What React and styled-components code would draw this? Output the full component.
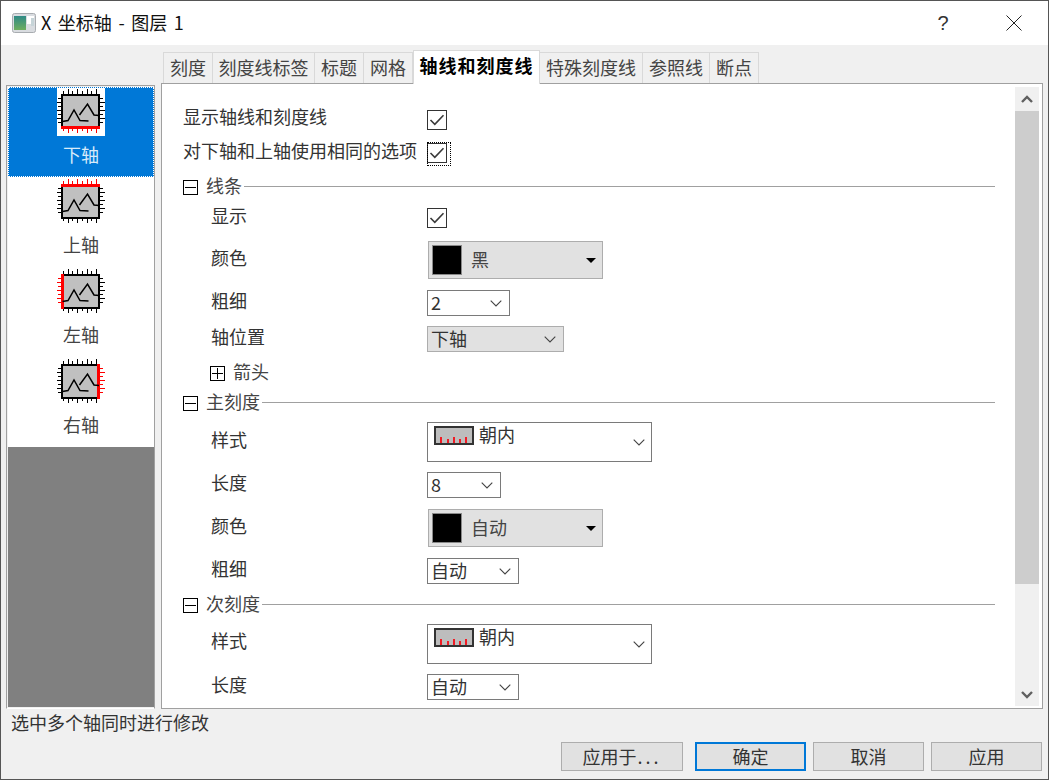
import React from 'react';
import styled, { createGlobalStyle } from 'styled-components';

const Global = createGlobalStyle`
  html, body { margin: 0; padding: 0; background: #f0f0f0; }
  * { box-sizing: border-box; }
  body { font-family: "Noto Sans CJK SC", "Liberation Sans", sans-serif; font-size: 18px; color: #333; }
`;

const Dialog = styled.div`
  width: 1049px; height: 780px; display: flex; flex-direction: column;
  background: #f0f0f0; border: 1px solid #555; overflow: hidden;
`;
const TitleBar = styled.div`
  height: 44px; flex: none; background: #fff; display: flex; align-items: center;
  padding-left: 11px;
`;
const TitleText = styled.div`
  margin-left: 5px; margin-bottom: 2px; flex: 1; font-size: 18px; line-height: 24px; color: #111;
  white-space: pre; word-spacing: 2.5px;
`;
const TitleButton = styled.div`
  width: 46px; height: 44px; display: flex; align-items: center; justify-content: center;
  color: #333; font-size: 20px; font-family: "Liberation Sans", sans-serif;
`;
const HelpButton = styled(TitleButton)`
  margin-right: 25px;
`;
const CloseButton = styled(TitleButton)`
  margin-right: 11px;
`;
const Workspace = styled.div`
  height: 659px; flex: none; margin-top: 5px; padding-left: 5px; display: flex;
`;
const Sidebar = styled.div`
  width: 149px; margin-top: 35px; display: flex; flex-direction: column;
  border: 1px solid; border-color: #a0a0a0 #a0a0a0 #fff #a0a0a0;
  box-shadow: inset 1px 1px 0 #f0f0f0;
  padding: 1px 0 1px 1px;
`;
const AxisItem = styled.div`
  height: 90px; flex: none; display: flex; flex-direction: column; align-items: center;
  background: ${p => (p.$selected ? '#0078d7' : '#fff')};
  color: ${p => (p.$selected ? '#d8ebfa' : '#444')};
  outline: ${p => (p.$selected ? '1px dotted #fff' : 'none')};
  outline-offset: -1px;
  padding-top: 1px;
`;
const AxisName = styled.div`
  margin-top: 5px; font-size: 18px; line-height: 26px;
`;
const SidebarFill = styled.div`
  flex: 1; background: #808080;
`;
const MainColumn = styled.div`
  width: 882px; margin-left: 6px; display: flex; flex-direction: column;
`;
const TabStrip = styled.div`
  height: 33px; flex: none; padding-left: 2px; display: flex; align-items: flex-end;
  position: relative; z-index: 1;
`;
const Tab = styled.div`
  height: ${p => (p.$active ? '34px' : '31px')};
  width: ${p => p.$w}px;
  margin-bottom: ${p => (p.$active ? '-1px' : '0')};
  background: ${p => (p.$active ? '#fff' : '#f0f0f0')};
  border: 1px solid #d9d9d9;
  border-left: ${p => (p.$active ? '1px solid #d9d9d9' : '0')};
  border-bottom: 0;
  font-weight: ${p => (p.$active ? 700 : 400)};
  color: ${p => (p.$active ? '#000' : '#444')};
  letter-spacing: ${p => (p.$active ? '1px' : '0')};
  font-size: 18px; line-height: 28px; text-align: center; white-space: nowrap;
`;
const FirstTab = styled(Tab)`
  border-left: 1px solid #d9d9d9;
`;
const Panel = styled.div`
  height: 626px; flex: none; background: #fff; border: 1px solid #a0a0a0;
  display: flex; overflow: hidden;
`;
const Form = styled.div`
  flex: 1; min-width: 0; padding: 19px 20px 0 21px; overflow: hidden;
`;
const Row = styled.div`
  height: ${p => p.$h}px; display: flex; align-items: center;
`;
const Label = styled.div`
  width: 244px; flex: none; padding-left: ${p => (p.$indent ? 28 : 0)}px;
  margin-bottom: ${p => p.$lift ?? 6}px;
  line-height: 24px; white-space: nowrap; color: #333;
`;
const Section = styled.div`
  height: ${p => p.$h || 30}px; display: flex; align-items: center;
  padding-left: ${p => (p.$indent ? 27 : 0)}px;
`;
const SectionTitle = styled.div`
  margin-left: 8px; margin-bottom: 2px; line-height: 24px; white-space: nowrap; color: #444;
`;
const Expander = styled.div`
  width: 15px; height: 15px; margin-top: 3px; flex: none; border: 1px solid #000; background: #fff;
  display: flex; align-items: center; justify-content: center;
`;
const Rule = styled.div`
  flex: 1; height: 1px; margin-left: 2px; background: #a0a0a0;
`;
const CheckBox = styled.div`
  width: 20px; height: 20px; border: 1px solid #333; background: #fff;
  display: flex; align-items: center; justify-content: center;
`;
const FocusRing = styled.div`
  width: 24px; height: 24px; outline: 1px dotted #000; outline-offset: -1px;
  padding: 1px 0 0 0;
`;
const Combo = styled.div`
  width: ${p => p.$w}px; height: ${p => p.$h || 26}px; flex: none;
  display: flex; align-items: center;
  background: ${p => (p.$filled ? '#e1e1e1' : '#fff')};
  border: 1px solid ${p => (p.$filled ? '#adadad' : '#7a7a7a')};
  padding: 0 7px 0 3px; line-height: 24px; color: #333;
`;
const ComboValue = styled.div`
  flex: 1; white-space: nowrap; font-size: 18px; margin-bottom: 2px;
`;
const ColorCombo = styled(Combo)`
  padding: 0 6px 0 3px; margin-left: 1px;
`;
const Swatch = styled.div`
  width: 30px; height: 30px; flex: none; background: #000; border: 1px solid #8a8a8a;
`;
const SwatchName = styled.div`
  flex: 1; margin-left: 9px; margin-bottom: 3px; color: #444;
`;
const Caret = styled.div`
  width: 0; height: 0; border: 5px solid transparent; border-top-color: #000; border-bottom: 0;
`;
const StyleCombo = styled(Combo)`
  align-items: flex-start; padding: 3px 6px 0 6px;
`;
const StyleName = styled.div`
  flex: 1; margin-left: 5px; font-size: 18px; line-height: 20px; margin-top: -2px;
`;
const StyleChevron = styled.div`
  align-self: center; margin-top: -3px; display: flex;
`;
const ScrollBar = styled.div`
  width: 24px; flex: none; margin: 3px 3px 2px 0; background: #f0f0f0;
  display: flex; flex-direction: column;
`;
const ScrollArrow = styled.div`
  height: 23px; flex: none; display: flex; align-items: center; justify-content: center;
`;
const ScrollThumb = styled.div`
  height: 473px; flex: none; margin-top: 1px; background: #cdcdcd;
`;
const ScrollTrack = styled.div`
  flex: 1;
`;
const Footer = styled.div`
  flex: 1; display: flex; flex-direction: column; padding: 0 6px 0 10px;
`;
const Status = styled.div`
  height: 33px; flex: none; line-height: 26px; color: #333;
`;
const Buttons = styled.div`
  display: flex; justify-content: flex-end;
`;
const Button = styled.div`
  width: ${p => p.$w}px; height: 29px; margin-left: ${p => p.$gap}px;
  display: flex; align-items: center; justify-content: center;
  background: #e1e1e1; border: ${p => (p.$primary ? '2px solid #0078d7' : '1px solid #adadad')};
  font-size: 18px; color: #333; padding-bottom: 1px;
`;
const Ellipsis = styled.span`
  letter-spacing: 3px; margin-left: 1px;
`;

// Small dialog glyph in the caption
const AppIcon = () => (
  <svg width="24" height="20" viewBox="0 0 24 20">
    <defs>
      <linearGradient id="capfill" x1="0" y1="0" x2="0" y2="1">
        <stop offset="0" stopColor="#2f8a86" />
        <stop offset="1" stopColor="#6fae5e" />
      </linearGradient>
    </defs>
    <rect x="0.5" y="0.5" width="23" height="19" rx="2" fill="#d9dce0" stroke="#a8acb0" />
    <rect x="2" y="3" width="12" height="14" fill="url(#capfill)" />
    <rect x="15" y="3" width="7" height="8" fill="#fff" />
    <rect x="19" y="5" width="3" height="8" fill="#c6d4d8" />
  </svg>
);

const CloseGlyph = () => (
  <svg width="16" height="16" viewBox="0 0 16 16">
    <path d="M0.5 0.5L15.5 15.5M15.5 0.5L0.5 15.5" stroke="#222" strokeWidth="1" fill="none" />
  </svg>
);

const topTicks = [6.5, 11.5, 15.5, 20.5, 25.5, 30.5, 34.5, 39.5];
const sideTicks = [10.5, 14.5, 18.5, 22.5, 26.5, 30.5, 34.5];

// Axis chip: a plotted curve in a frame with ticks, the chosen side painted red
const AxisGlyph = ({ side, backed }) => {
  const tone = s => (s === side ? '#ff0000' : '#000');
  return (
    <svg width="48" height="48" viewBox="0 0 48 48" style={{ background: backed ? '#fff' : 'none', display: 'block' }}>
      <rect x="5" y="7" width="37" height="33" fill="#c0c0c0" stroke="#000" strokeWidth="2" />
      {topTicks.map((x, i) => (
        <React.Fragment key={x}>
          <line x1={x} x2={x} y1={i % 2 ? 1 : 3} y2="6" stroke={tone('top')} strokeWidth="1" />
          <line x1={x} x2={x} y1="41" y2={i % 2 ? 45 : 43} stroke={tone('bottom')} strokeWidth="1" />
        </React.Fragment>
      ))}
      {sideTicks.map((y, i) => (
        <React.Fragment key={y}>
          <line x1={i % 2 ? 0 : 1} x2="4" y1={y} y2={y} stroke={tone('left')} strokeWidth="1" />
          <line x1="43" x2={i % 2 ? 48 : 46} y1={y} y2={y} stroke={tone('right')} strokeWidth="1" />
        </React.Fragment>
      ))}
      {side === 'bottom' && <rect x="4" y="38" width="39" height="3" fill="#ff0000" />}
      {side === 'top' && <rect x="4" y="6" width="39" height="3" fill="#ff0000" />}
      {side === 'left' && <rect x="4" y="6" width="3" height="35" fill="#ff0000" />}
      {side === 'right' && <rect x="40" y="6" width="3" height="35" fill="#ff0000" />}
      <path d="M5.5 33.5L11 32.5L17 22L23 32.5L31.5 33M22.5 27L30.5 16L37 27L42 27.5" fill="none" stroke="#000" strokeWidth="1.5" />
    </svg>
  );
};

const Check = () => (
  <svg width="18" height="18" viewBox="0 0 18 18">
    <path d="M2.5 9L6.8 13.3L15.5 4.2" fill="none" stroke="#3a3a3a" strokeWidth="1.6" />
  </svg>
);

const Chevron = () => (
  <svg width="12" height="7" viewBox="0 0 12 7">
    <path d="M0.7 0.7L6 6L11.3 0.7" fill="none" stroke="#444" strokeWidth="1.1" />
  </svg>
);

const Minus = () => (
  <svg width="13" height="13" viewBox="0 0 13 13">
    <path d="M1 6.5H12" stroke="#000" strokeWidth="1" />
  </svg>
);
const Plus = () => (
  <svg width="13" height="13" viewBox="0 0 13 13">
    <path d="M1 6.5H12M6.5 1V12" stroke="#000" strokeWidth="1" />
  </svg>
);

// Tick style preview: inward red ticks along the bottom of a grey strip
const TickStyle = () => (
  <svg width="40" height="19" viewBox="0 0 40 19" style={{ flex: 'none' }}>
    <rect x="1" y="1" width="38" height="17" fill="#bdbdbd" stroke="#333" strokeWidth="2" />
    {[6, 13, 19, 25, 31].map((x, i) => (
      <rect key={x} x={x} y={i % 2 ? 13 : 11} width="2" height={i % 2 ? 4 : 6} fill="#f01c25" />
    ))}
  </svg>
);

const ScrollChevron = ({ up }) => (
  <svg width="12" height="8" viewBox="0 0 12 8">
    <path d={up ? 'M1 7L6 2L11 7' : 'M1 1L6 6L11 1'} fill="none" stroke="#606060" strokeWidth="2.4" />
  </svg>
);

const axes = [
  { side: 'bottom', name: '下轴' },
  { side: 'top', name: '上轴' },
  { side: 'left', name: '左轴' },
  { side: 'right', name: '右轴' },
];
const tabs = [
  ['刻度', 50], ['刻度线标签', 102], ['标题', 49], ['网格', 49],
  ['轴线和刻度线', 127], ['特殊刻度线', 103], ['参照线', 67], ['断点', 49],
];

const ValueCombo = ({ w, value, filled }) => (
  <Combo $w={w} $filled={filled}>
    <ComboValue>{value}</ComboValue>
    <Chevron />
  </Combo>
);
const ColorPick = ({ name }) => (
  <ColorCombo $w={175} $h={38} $filled>
    <Swatch />
    <SwatchName>{name}</SwatchName>
    <Caret />
  </ColorCombo>
);
const TickCombo = () => (
  <StyleCombo $w={225} $h={40}>
    <TickStyle />
    <StyleName>朝内</StyleName>
    <StyleChevron><Chevron /></StyleChevron>
  </StyleCombo>
);

export default function App() {
  return (
    <>
      <Global />
      <Dialog>
        <TitleBar>
          <AppIcon />
          <TitleText>X 坐标轴 - 图层 1</TitleText>
          <HelpButton>?</HelpButton>
          <CloseButton><CloseGlyph /></CloseButton>
        </TitleBar>
        <Workspace>
          <Sidebar>
            {axes.map((a, i) => (
              <AxisItem key={a.side} $selected={i === 0}>
                <AxisGlyph side={a.side} backed={i === 0} />
                <AxisName>{a.name}</AxisName>
              </AxisItem>
            ))}
            <SidebarFill />
          </Sidebar>
          <MainColumn>
            <TabStrip>
              {tabs.map(([t, w], i) => {
                const Item = i === 0 ? FirstTab : Tab;
                return <Item key={t} $w={w} $active={i === 4}>{t}</Item>;
              })}
            </TabStrip>
            <Panel>
              <Form>
                <Row $h={34}>
                  <Label $lift={8}>显示轴线和刻度线</Label>
                  <CheckBox><Check /></CheckBox>
                </Row>
                <Row $h={34}>
                  <Label $lift={8}>对下轴和上轴使用相同的选项</Label>
                  <FocusRing><CheckBox><Check /></CheckBox></FocusRing>
                </Row>
                <Section>
                  <Expander><Minus /></Expander>
                  <SectionTitle>线条</SectionTitle>
                  <Rule />
                </Section>
                <Row $h={34}>
                  <Label $indent>显示</Label>
                  <CheckBox><Check /></CheckBox>
                </Row>
                <Row $h={50}>
                  <Label $indent>颜色</Label>
                  <ColorPick name="黑" />
                </Row>
                <Row $h={36}>
                  <Label $indent>粗细</Label>
                  <ValueCombo w={83} value="2" />
                </Row>
                <Row $h={36}>
                  <Label $indent>轴位置</Label>
                  <ValueCombo w={137} value="下轴" filled />
                </Row>
                <Section $indent>
                  <Expander><Plus /></Expander>
                  <SectionTitle>箭头</SectionTitle>
                </Section>
                <Section>
                  <Expander><Minus /></Expander>
                  <SectionTitle>主刻度</SectionTitle>
                  <Rule />
                </Section>
                <Row $h={50}>
                  <Label $indent>样式</Label>
                  <TickCombo />
                </Row>
                <Row $h={36}>
                  <Label $indent>长度</Label>
                  <ValueCombo w={74} value="8" />
                </Row>
                <Row $h={50}>
                  <Label $indent>颜色</Label>
                  <ColorPick name="自动" />
                </Row>
                <Row $h={36}>
                  <Label $indent>粗细</Label>
                  <ValueCombo w={92} value="自动" />
                </Row>
                <Section>
                  <Expander><Minus /></Expander>
                  <SectionTitle>次刻度</SectionTitle>
                  <Rule />
                </Section>
                <Row $h={50}>
                  <Label $indent $lift={8}>样式</Label>
                  <TickCombo />
                </Row>
                <Row $h={36}>
                  <Label $indent>长度</Label>
                  <ValueCombo w={92} value="自动" />
                </Row>
              </Form>
              <ScrollBar>
                <ScrollArrow><ScrollChevron up /></ScrollArrow>
                <ScrollThumb />
                <ScrollTrack />
                <ScrollArrow><ScrollChevron /></ScrollArrow>
              </ScrollBar>
            </Panel>
          </MainColumn>
        </Workspace>
        <Footer>
          <Status>选中多个轴同时进行修改</Status>
          <Buttons>
            <Button $w={122} $gap={0}>应用于<Ellipsis>...</Ellipsis></Button>
            <Button $w={111} $gap={12} $primary>确定</Button>
            <Button $w={111} $gap={7}>取消</Button>
            <Button $w={111} $gap={7}>应用</Button>
          </Buttons>
        </Footer>
      </Dialog>
    </>
  );
}
